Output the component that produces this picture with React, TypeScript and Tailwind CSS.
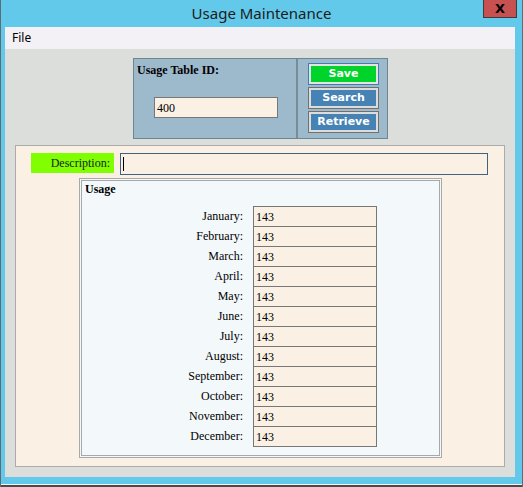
import React from "react";

const months = [
  "January",
  "February",
  "March",
  "April",
  "May",
  "June",
  "July",
  "August",
  "September",
  "October",
  "November",
  "December",
];

function ActionButton({ label, primary }: { label: string; primary?: boolean }) {
  return (
    <div
      className={
        primary
          ? "h-[22px] w-[71px] border border-[#3d7fb3] bg-[#e3e3e3] p-[2px]"
          : "h-[22px] w-[71px] border border-[#707070] bg-[#dcdcdc] p-[2px]"
      }
    >
      <div
        className={
          primary
            ? "flex h-full items-center justify-center bg-[#00d32a] text-[11px] font-bold text-white"
            : "flex h-full items-center justify-center bg-[#4682b4] text-[11px] font-bold text-white"
        }
        style={{ fontFamily: '"DejaVu Sans", Verdana, sans-serif' }}
      >
        {label}
      </div>
    </div>
  );
}

export default function App() {
  return (
    <div className="flex h-[487px] w-[523px] flex-col border-x border-[#5d6b73] bg-[#62c9ea]">
      {/* title bar */}
      <div className="relative flex h-[27px] shrink-0 items-center justify-center">
        <span
          className="pb-[1px] text-[15px] text-[#1b1b1b]"
          style={{ fontFamily: '"Noto Sans", "Open Sans", sans-serif' }}
        >
          Usage Maintenance
        </span>
        <div className="absolute right-[5px] top-0 flex h-[18px] w-[34px] items-center justify-center border border-t-0 border-[#3c3c3c] bg-[#c75050]">
          <span
            className="text-[13px] font-bold leading-none text-black"
            style={{ fontFamily: '"DejaVu Sans", sans-serif' }}
          >
            X
          </span>
        </div>
      </div>

      {/* client */}
      <div className="ml-[4px] mr-[7px] flex h-[450px] shrink-0 flex-col">
        <div
          className="flex h-[22px] items-center bg-[#f3f1f5] pl-[7px] text-[12px] text-black"
          style={{ fontFamily: '"Noto Sans", sans-serif' }}
        >
          File
        </div>

        <div className="flex h-[428px] flex-col bg-[#dbdedb]">
          {/* header panel */}
          <div
            className="ml-[128px] mt-[9px] flex h-[81px] w-[255px] border border-[#6e8592] bg-[#9db9cc]"
            style={{ fontFamily: '"Liberation Serif", serif' }}
          >
            <div className="flex w-[164px] flex-col border-r-2 border-[#7a8c96] pl-[3px] pt-[2px]">
              <span className="text-[12px] font-bold text-black">Usage Table ID:</span>
              <div className="ml-[17px] mt-[18px] flex h-[21px] w-[124px] items-center border border-[#777777] bg-[#faf0e4] pl-[2px] text-[12px] text-black">
                400
              </div>
            </div>
            <div className="flex flex-col gap-[2px] pl-[10px] pt-[4px]">
              <ActionButton label="Save" primary />
              <ActionButton label="Search" />
              <ActionButton label="Retrieve" />
            </div>
          </div>

          {/* detail panel */}
          <div
            className="ml-[10px] mt-[6px] flex h-[322px] w-[490px] flex-col border border-[#ababab] bg-[#faf0e4]"
            style={{ fontFamily: '"Liberation Serif", serif' }}
          >
            <div className="ml-[15px] mt-[7px] flex items-start gap-[6px]">
              <div className="flex h-[20px] w-[83px] items-center justify-end bg-[#7fff00] pr-[4px] text-[12px] text-[#222222]">
                Description:
              </div>
              <div className="flex h-[22px] w-[368px] items-center border border-[#3f6280] bg-[#faf0e4] pl-[2px]">
                <div className="h-[14px] w-px bg-black" />
              </div>
            </div>

            <div className="ml-[63px] mt-[3px] h-[280px] w-[363px] border-[3px] border-double border-[#a8a8a8] bg-[#f3f8fb]">
              <div className="pl-[3px] pt-[1px] text-[12px] font-bold leading-[14px] text-black">
                Usage
              </div>
              <div className="mt-[10px] flex flex-col">
                {months.map((m, i) => (
                  <div key={m} className="flex h-[20px] items-stretch">
                    <div className="flex w-[161px] items-center justify-end text-[12px] text-black">
                      {m}:
                    </div>
                    <div
                      className={
                        i === months.length - 1
                          ? "ml-[10px] flex h-[21px] w-[124px] items-center border border-[#777777] bg-[#faf0e4] pl-[2px] text-[12px] text-black"
                          : "ml-[10px] flex h-[20px] w-[124px] items-center border border-b-0 border-[#777777] bg-[#faf0e4] pl-[2px] text-[12px] text-black"
                      }
                    >
                      143
                    </div>
                  </div>
                ))}
              </div>
            </div>
          </div>
        </div>
      </div>

      <div className="h-[7px] shrink-0" />
      <div className="h-px shrink-0 bg-[#f4f4f4]" />
      <div className="h-[2px] shrink-0 bg-[#4a4a4a]" />
    </div>
  );
}
